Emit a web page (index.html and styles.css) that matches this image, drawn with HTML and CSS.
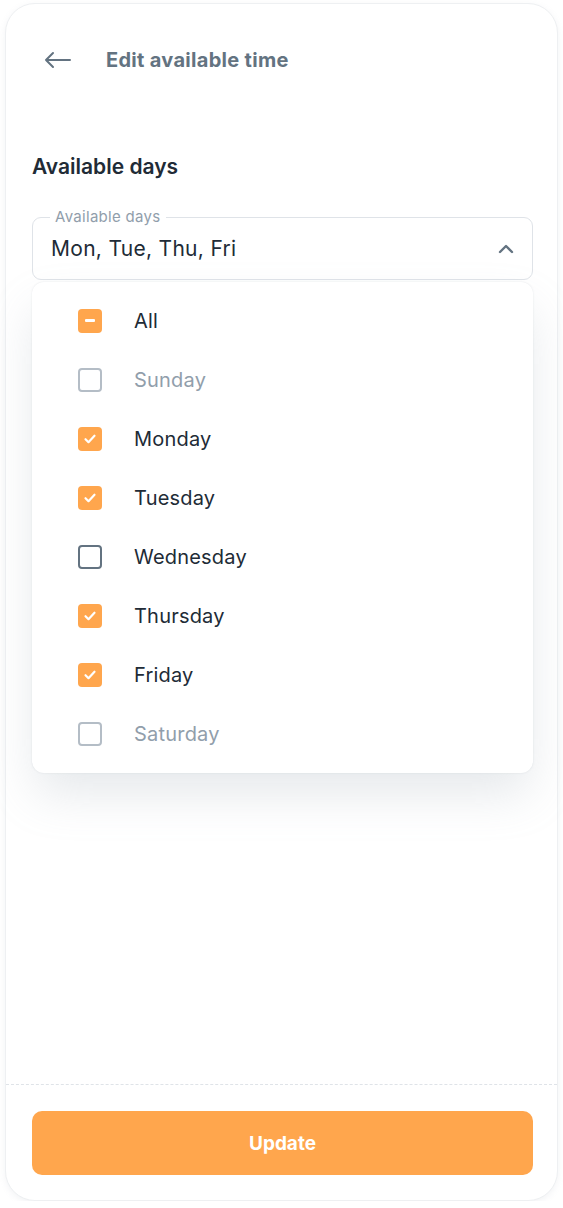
FILE: index.html
```html
<!DOCTYPE html>
<html>
<head>
<meta charset="utf-8">
<link rel="stylesheet" href="styles.css">
</head>
<body>
<div class="card">
  <div class="header">
    <svg class="back" width="28" height="18" viewBox="0 0 28 18"><path d="M26 9H2M9 2L2 9l7 7" fill="none" stroke="#637381" stroke-width="2" stroke-linecap="round" stroke-linejoin="round"/></svg>
    <div class="title">Edit available time</div>
  </div>
  <div class="main">
    <h2 class="heading">Available days</h2>
    <div class="field-wrap">
      <div class="field">
        <span class="legend">Available days</span>
        <span class="value">Mon, Tue, Thu, Fri</span>
        <svg class="chev" width="16" height="10" viewBox="0 0 16 10"><path d="M2 8l6-6 6 6" fill="none" stroke="#637381" stroke-width="2.4" stroke-linecap="round" stroke-linejoin="round"/></svg>
      </div>
      <ul class="menu">
        <li class="item"><span class="cb on"><span class="dash"></span></span><span class="lbl">All</span></li>
        <li class="item dis"><span class="cb off"></span><span class="lbl">Sunday</span></li>
        <li class="item"><span class="cb on"><svg width="14" height="12" viewBox="0 0 14 12"><path d="M2.5 6.2l3 3 6-6.5" fill="none" stroke="#fff" stroke-width="2.2" stroke-linecap="round" stroke-linejoin="round"/></svg></span><span class="lbl">Monday</span></li>
        <li class="item"><span class="cb on"><svg width="14" height="12" viewBox="0 0 14 12"><path d="M2.5 6.2l3 3 6-6.5" fill="none" stroke="#fff" stroke-width="2.2" stroke-linecap="round" stroke-linejoin="round"/></svg></span><span class="lbl">Tuesday</span></li>
        <li class="item"><span class="cb off dark"></span><span class="lbl">Wednesday</span></li>
        <li class="item"><span class="cb on"><svg width="14" height="12" viewBox="0 0 14 12"><path d="M2.5 6.2l3 3 6-6.5" fill="none" stroke="#fff" stroke-width="2.2" stroke-linecap="round" stroke-linejoin="round"/></svg></span><span class="lbl">Thursday</span></li>
        <li class="item"><span class="cb on"><svg width="14" height="12" viewBox="0 0 14 12"><path d="M2.5 6.2l3 3 6-6.5" fill="none" stroke="#fff" stroke-width="2.2" stroke-linecap="round" stroke-linejoin="round"/></svg></span><span class="lbl">Friday</span></li>
        <li class="item dis"><span class="cb off"></span><span class="lbl">Saturday</span></li>
      </ul>
    </div>
  </div>
  <div class="footer">
    <button class="btn">Update</button>
  </div>
</div>
</body>
</html>
```
FILE: styles.css
```css
* { box-sizing: border-box; }
html, body { margin: 0; padding: 0; background: #fff; }
body { font-family: Inter, "Noto Sans", sans-serif; color: #212b36; }
.card {
  margin: 3px 0 0 5px;
  width: 553px;
  height: 1198px;
  border: 1px solid #eef0f2;
  border-radius: 30px;
  box-shadow: 0 2px 6px rgba(145,158,171,0.12);
  display: flex;
  flex-direction: column;
  background: #fff;
}
.header {
  display: flex;
  align-items: center;
  height: 32px;
  margin-top: 40px;
  padding-left: 38px;
}
.back { display: block; }
.title {
  margin-left: 34px;
  font-size: 20px;
  font-weight: 700;
  color: #637381;
  letter-spacing: 0.3px;
}
.main {
  flex: 1;
  padding: 0 24px 0 26px;
}
.heading {
  margin: 77px 0 0;
  font-size: 21px;
  line-height: 28px;
  font-weight: 600;
  color: #212b36;
}
.field-wrap { position: relative; margin-top: 36px; }
.field {
  position: relative;
  height: 63px;
  border: 1px solid #dfe3e8;
  border-radius: 9px;
  display: flex;
  align-items: center;
  padding: 0 18px;
}
.legend {
  position: absolute;
  top: -10px;
  left: 17px;
  padding: 0 5px;
  background: #fff;
  font-size: 15px;
  line-height: 18px;
  letter-spacing: 0.3px;
  color: #919eab;
}
.value { flex: 1; font-size: 21px; letter-spacing: 0.3px; color: #212b36; }
.chev { display: block; }
.menu {
  position: absolute;
  top: 65px;
  left: 0;
  right: 0;
  margin: 0;
  padding: 9px 0 10px;
  list-style: none;
  background: #fff;
  border-radius: 12px;
  box-shadow: 0 0 2px rgba(145,158,171,0.24), 0 24px 48px -4px rgba(145,158,171,0.24);
}
.item {
  height: 59px;
  display: flex;
  align-items: center;
  padding-left: 46px;
}
.cb {
  width: 24px;
  height: 24px;
  border-radius: 4px;
  display: flex;
  align-items: center;
  justify-content: center;
  flex: none;
}
.cb.on { background: #ffa64d; }
.cb.off { border: 2px solid #b4bdc6; }
.cb.dark { border-color: #637381; }
.dash { width: 10px; height: 3px; border-radius: 1px; background: #fff; }
.lbl { margin-left: 32px; font-size: 20px; letter-spacing: 0.2px; color: #212b36; }
.dis .lbl { color: #919eab; }
.footer {
  border-top: 1px dashed #dfe3e8;
  padding: 26px 24px 25px 26px;
}
.btn {
  display: block;
  width: 100%;
  height: 64px;
  border: 0;
  border-radius: 10px;
  background: #ffa64d;
  color: #fff;
  font-family: Inter, "Noto Sans", sans-serif;
  font-size: 19px;
  font-weight: 700;
}
```
